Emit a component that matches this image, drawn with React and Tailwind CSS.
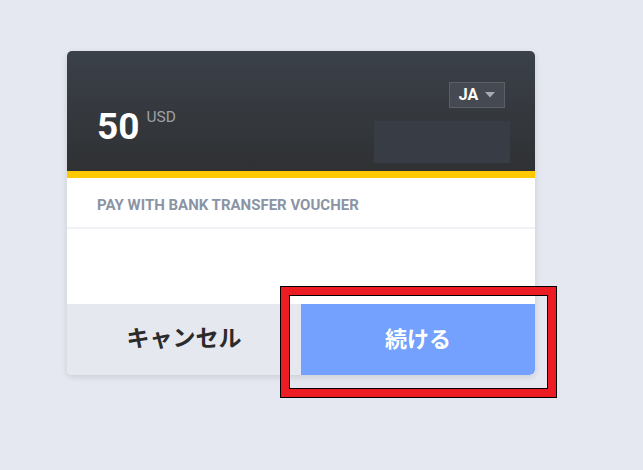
export default function App() {
  return (
    <div className="min-h-[470px] w-[643px] bg-[#e5e8f0] pt-[51px] pl-[67px] relative" style={{ fontFamily: 'Roboto, "Noto Sans CJK JP", sans-serif' }}>
      <div className="w-[468px] rounded-[5px] overflow-hidden bg-white shadow-[0_2px_6px_rgba(0,0,0,0.12)]">
        <div className="h-[120px] bg-gradient-to-b from-[#3b414a] to-[#2f3133] flex justify-between pl-[30px]">
          <div className="pt-[60px] flex items-start">
            <span className="text-[37px] leading-[32px] font-bold text-white">50</span>
            <span className="ml-[7px] mt-[-2px] text-[15.5px] leading-[16px] text-[#9da1a8]">USD</span>
          </div>
          <div className="flex flex-col items-end pr-[25px]">
            <div className="mt-[31px] mr-[5px] h-[26px] w-[56px] border border-[#5b6068] bg-[#454a52] flex items-center justify-center gap-[7px]">
              <span className="text-[16px] font-bold text-white leading-none">JA</span>
              <svg width="10" height="6" viewBox="0 0 10 6"><path d="M0 0h10L5 5.5z" fill="#a7abb2" /></svg>
            </div>
            <div className="mt-[13px] h-[42px] w-[136px] bg-[#383c44]" />
          </div>
        </div>
        <div className="h-[7px] bg-[#fdc900]" />
        <div className="h-[51px] border-b-2 border-[#f1f2f5] flex items-center pl-[30px] pt-[5px]">
          <span className="text-[15px] font-bold tracking-[0px] text-[#8b94a4]">PAY WITH BANK TRANSFER VOUCHER</span>
        </div>
        <div className="h-[75px]" />
        <div className="h-[71px] flex">
          <button className="w-[234px] bg-[#e5e8ef] text-[23px] font-bold text-[#2b2b2b] flex items-center justify-center">キャンセル</button>
          <button className="w-[234px] bg-[#74a1fd] text-[22px] font-bold text-white flex items-center justify-center rounded-br-[5px]">続ける</button>
        </div>
      </div>
      <div className="absolute left-[280px] top-[286px] w-[277px] h-[112px] border border-black">
        <div className="w-full h-full border-[8px] border-[#ec1c24]">
          <div className="w-full h-full border border-black" />
        </div>
      </div>
    </div>
  );
}
